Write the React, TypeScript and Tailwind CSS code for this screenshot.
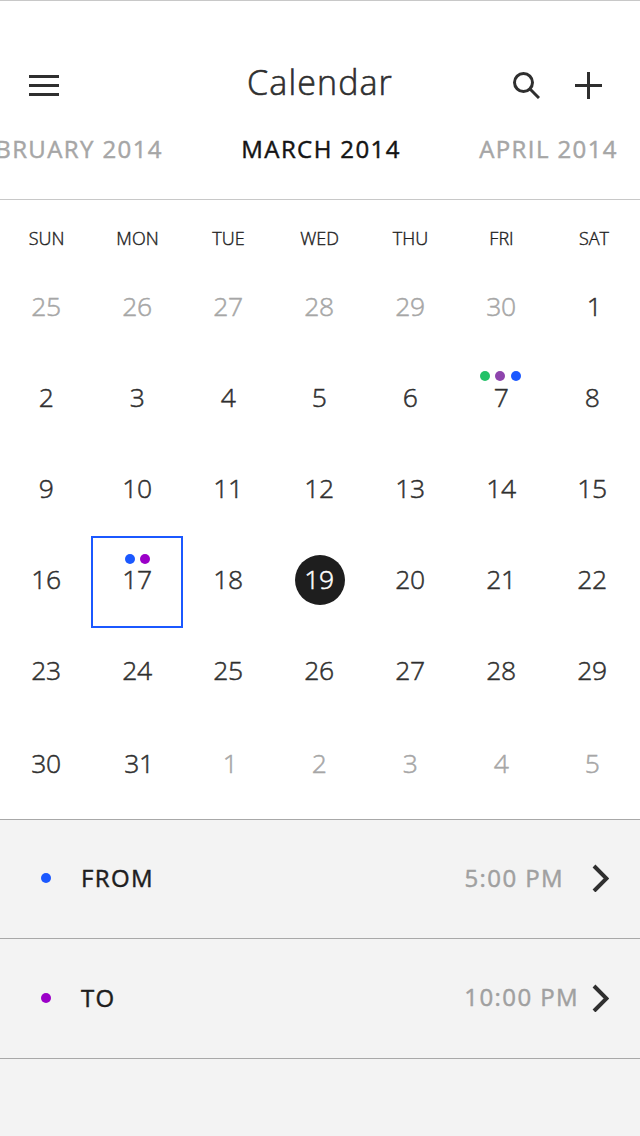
import React from 'react';
import clsx from 'clsx';

interface Day {
  label: number;
  muted?: boolean;
  selected?: boolean;
  today?: boolean;
  nudge?: boolean;
  dots?: string[];
}

interface TimeRowProps {
  label: string;
  time: string;
  dot: string;
  rowClass: string;
  timeClass: string;
}

const weekdays = ['SUN', 'MON', 'TUE', 'WED', 'THU', 'FRI', 'SAT'];

const muted = (label: number): Day => ({ label, muted: true, nudge: label === 1 });

const marked: Record<number, Partial<Day>> = {
  1: { nudge: true },
  7: { dots: ['bg-[#23c268]', 'bg-[#8e44ad]', 'bg-[#1b58ff]'] },
  17: { selected: true, dots: ['bg-[#1b58ff]', 'bg-[#9b00c8]'] },
  19: { today: true },
  31: { nudge: true },
};

const days: Day[] = [
  ...[25, 26, 27, 28, 29, 30].map(muted),
  ...Array.from({ length: 31 }, (_, i) => ({ label: i + 1, ...marked[i + 1] })),
  ...[1, 2, 3, 4, 5].map(muted),
];

const weeks = Array.from({ length: 6 }, (_, i) => days.slice(i * 7, i * 7 + 7));

function DayCell({ day }: { day: Day }) {
  return (
    <div
      className={clsx(
        'relative flex h-[91px] w-[91px] justify-center pt-[26px]',
        day.nudge ? 'pl-[5px]' : 'pl-px',
        day.muted ? 'text-[#a6a6a6]' : 'text-[#2f2f2f]'
      )}
    >
      {day.selected && (
        <div className="absolute top-0 left-0 h-[92px] w-[92px] border-2 border-[#1b58ff]" />
      )}
      {day.today && (
        <div className="absolute top-[19px] left-[22px] h-[50px] w-[50px] rounded-full bg-[#1e1e1e]" />
      )}
      {day.dots && (
        <div
          className={clsx(
            'absolute flex w-full justify-center gap-[5px]',
            day.selected ? 'top-[18px] left-px' : 'top-[17px] left-0'
          )}
        >
          {day.dots.map((color) => (
            <span
              key={color}
              className={clsx('h-[10px] w-[10px] rounded-full nth-3:ml-px', color)}
            />
          ))}
        </div>
      )}
      <span className={clsx('relative h-[34px] leading-[34px]', day.today && 'text-white')}>
        {day.label}
      </span>
    </div>
  );
}

function TimeRow({ label, time, dot, rowClass, timeClass }: TimeRowProps) {
  return (
    <div
      className={clsx(
        'flex items-center border-b border-[#a8a8a8] pl-[41px] text-2xl font-medium tracking-[1.4px] [-webkit-text-stroke:0.45px]',
        rowClass
      )}
    >
      <span className={clsx('h-[10px] w-[10px] rounded-full', dot)} />
      <span className="ml-[30px] text-[#1e1e1e]">{label}</span>
      <span className={clsx('ml-auto text-[#a0a0a0]', timeClass)}>{time}</span>
      <svg className="mr-[31px] h-7 w-[17px]" viewBox="0 0 17 28" fill="none">
        <path d="M2 2 L14.5 14.5 L2 27" stroke="#2f2f2f" strokeWidth="4" />
      </svg>
    </div>
  );
}

export default function App() {
  return (
    <div className="flex h-[1136px] w-[640px] flex-col overflow-hidden bg-white font-['Open_Sans',sans-serif]">
      {/* Header */}
      <header className="flex h-[200px] shrink-0 flex-col border-y border-[#c8c8c8]">
        <div className="mt-[54px] flex h-[60px] items-center justify-between pr-[38px] pl-[29px]">
          <svg className="h-[21px] w-[30px]" viewBox="0 0 30 21" fill="#2f2f2f">
            <rect width="30" height="3" />
            <rect y="9" width="30" height="3" />
            <rect y="18" width="30" height="3" />
          </svg>
          <h1 className="-mt-[6px] ml-[68px] text-[34px] leading-[46px] font-light tracking-[1.1px] text-[#2f2f2f] [-webkit-text-stroke:0.6px]">
            Calendar
          </h1>
          <div className="flex items-center justify-end gap-[35px]">
            <svg className="h-[27px] w-[27px]" viewBox="0 0 27 27" fill="none" stroke="#2f2f2f" strokeWidth="3">
              <circle cx="10.5" cy="10.5" r="9" />
              <path d="M17 17 L26 26" />
            </svg>
            <svg className="h-[27px] w-[27px]" viewBox="0 0 27 27" fill="#2f2f2f">
              <rect x="12" width="3" height="27" />
              <rect y="12" width="27" height="3" />
            </svg>
          </div>
        </div>
        <div className="mt-[17px] flex justify-between pr-[22px] text-2xl leading-[34px] font-medium tracking-[1.4px] whitespace-nowrap text-[#a6a6a6] [-webkit-text-stroke:0.45px]">
          <span className="flex w-[163px] justify-end">FEBRUARY 2014</span>
          <span className="text-[#141414]">MARCH 2014</span>
          <span>APRIL 2014</span>
        </div>
      </header>

      {/* Weekdays */}
      <div className="mt-[25px] flex h-[26px] shrink-0 text-lg leading-[26px] font-light text-[#1e1e1e] [-webkit-text-stroke:0.4px]">
        {weekdays.map((name) => (
          <div key={name} className="w-[91px] pl-[2px] text-center last:pl-[5px]">
            {name}
          </div>
        ))}
      </div>

      {/* Days */}
      <div className="mt-3 flex shrink-0 flex-col text-[26.5px] font-light tracking-[-0.4px] [-webkit-text-stroke:0.5px]">
        {weeks.map((week, idx) => (
          <div key={idx} className={clsx('flex', idx === 5 && 'mt-[2px]')}>
            {week.map((day, col) => (
              <DayCell key={col} day={day} />
            ))}
          </div>
        ))}
      </div>

      {/* Time range */}
      <div className="mt-[8px] grid grow grid-rows-[119px_120px_1fr] border-t border-[#a8a8a8] bg-[#f3f3f3]">
        <TimeRow
          label="FROM"
          time="5:00 PM"
          dot="bg-[#1b58ff]"
          rowClass="pb-[2px]"
          timeClass="mr-[28px]"
        />
        <TimeRow
          label="TO"
          time="10:00 PM"
          dot="bg-[#9b00c8]"
          rowClass="pb-px"
          timeClass="mr-[13px] -mt-[2px]"
        />
      </div>
    </div>
  );
}
